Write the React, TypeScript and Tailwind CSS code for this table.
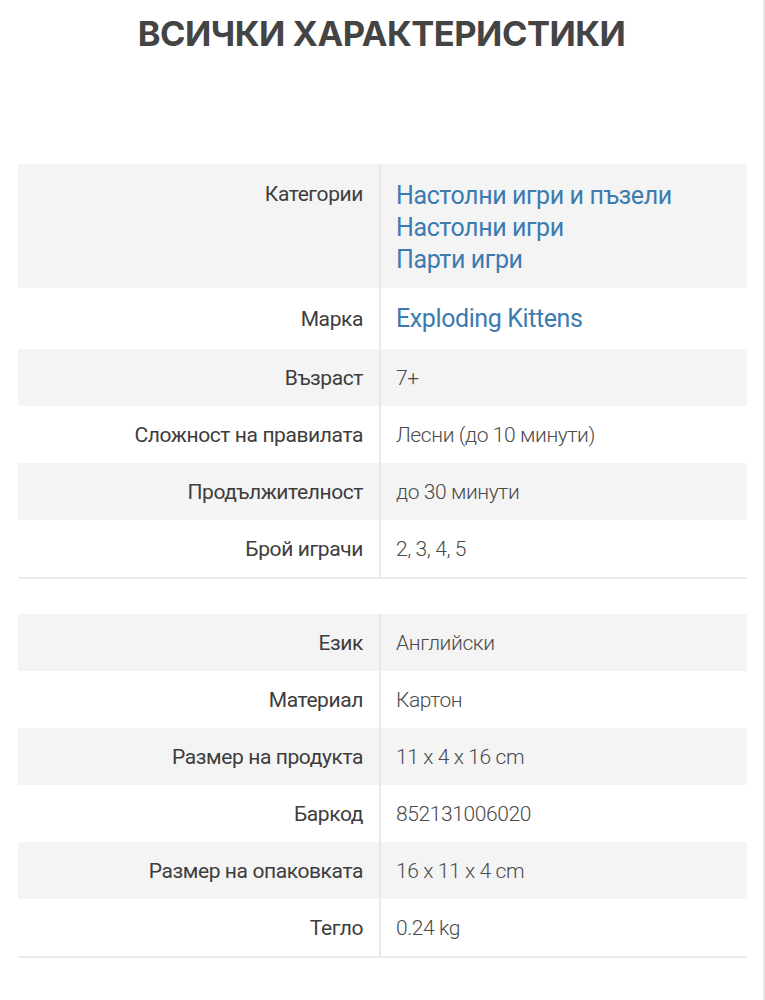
import React from "react";

interface Spec {
  label: string;
  values: string[];
  link?: boolean;
}

const mainSpecs: Spec[] = [
  { label: "Категории", values: ["Настолни игри и пъзели", "Настолни игри", "Парти игри"], link: true },
  { label: "Марка", values: ["Exploding Kittens"], link: true },
  { label: "Възраст", values: ["7+"] },
  { label: "Сложност на правилата", values: ["Лесни (до 10 минути)"] },
  { label: "Продължителност", values: ["до 30 минути"] },
  { label: "Брой играчи", values: ["2, 3, 4, 5"] }
];

const extraSpecs: Spec[] = [
  { label: "Език", values: ["Английски"] },
  { label: "Материал", values: ["Картон"] },
  { label: "Размер на продукта", values: ["11 x 4 x 16 cm"] },
  { label: "Баркод", values: ["852131006020"] },
  { label: "Размер на опаковката", values: ["16 x 11 x 4 cm"] },
  { label: "Тегло", values: ["0.24 kg"] }
];

function SpecTable({ specs }: { specs: Spec[] }) {
  return (
    <div className="border-b-2 border-[#ececec]">
      {specs.map((spec, i) => {
        const multi = spec.values.length > 1;
        const rowHeight = multi ? "" : spec.link ? "h-[61px]" : "h-[57px]";
        return (
          <div key={spec.label} className={`flex ${i % 2 === 0 ? "bg-[#f4f4f4]" : "bg-white"} ${rowHeight}`}>
            <div
              className={`flex w-[363px] shrink-0 justify-end border-r-2 border-[#e8e8e8] pr-[16px] text-[21px] tracking-[-0.4px] text-[#3d3d3d] ${
                multi ? "pt-[17px]" : "items-center"
              }`}
            >
              <span className="leading-[26px]">{spec.label}</span>
            </div>
            <div className={`flex flex-col pl-[15px] ${multi ? "pt-[16px] pb-[12px]" : "justify-center"}`}>
              {spec.values.map((v) =>
                spec.link ? (
                  <a key={v} href="#" className="text-[25px] leading-[32px] tracking-[-0.4px] text-[#3b7bb0]">
                    {v}
                  </a>
                ) : (
                  <span key={v} className="text-[21px] font-light leading-[26px] tracking-[-0.4px] text-[#4a4a4a]">
                    {v}
                  </span>
                )
              )}
            </div>
          </div>
        );
      })}
    </div>
  );
}

export default function App() {
  return (
    <div className="min-h-[1000px] border-r-2 border-[#e6e6e6] bg-white font-['Roboto',sans-serif]">
      <h1 className="pt-[13px] text-center font-['Inter',sans-serif] text-[34.5px] font-bold leading-[42px] tracking-[-0.5px] text-[#444444]">
        ВСИЧКИ ХАРАКТЕРИСТИКИ
      </h1>
      <div className="ml-[18px] mr-[16px] mt-[109px] flex flex-col gap-[35px]">
        <SpecTable specs={mainSpecs} />
        <SpecTable specs={extraSpecs} />
      </div>
    </div>
  );
}
